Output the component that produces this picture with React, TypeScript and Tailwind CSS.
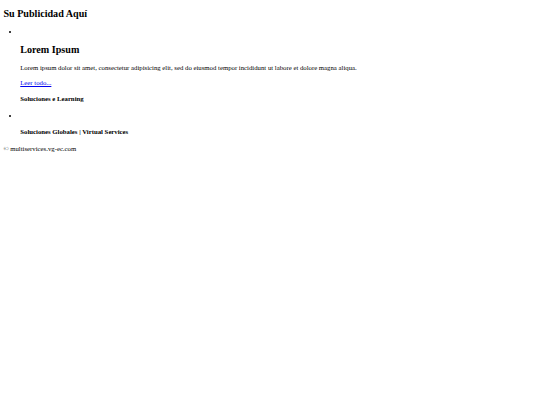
export default function App() {
  return (
    <div className="m-[3.375px] bg-white text-black text-[6.75px] leading-[7.6px] font-['Liberation_Serif','Times_New_Roman',serif]">
      <h2 className="my-[8.4px] text-[10.125px] font-bold leading-[11.5px]">Su Publicidad Aquí</h2>

      <ul className="my-[6.75px] pl-[16.875px] list-disc">
        <li>
          <div>{"\u00a0"}</div>
          <h2 className="my-[8.4px] text-[10.125px] font-bold leading-[11.5px]">Lorem Ipsum</h2>
          <p className="my-[6.75px]">
            Lorem ipsum dolor sit amet, consectetur adipisicing elit, sed do eiusmod tempor incididunt ut labore et
            dolore magna aliqua.
          </p>
          <p className="my-[6.75px]">
            <a href="#" className="text-[#0000ee] underline">
              Leer todo...
            </a>
          </p>
          <h4 className="my-[8.98px] font-bold">Soluciones e Learning</h4>
        </li>
        <li>
          <div>{"\u00a0"}</div>
          <h4 className="my-[8.98px] font-bold">Soluciones Globales | Virtual Services</h4>
        </li>
      </ul>

      <div>{"\u00a9\uFE0E"} multiservices.vg-ec.com</div>
    </div>
  );
}
